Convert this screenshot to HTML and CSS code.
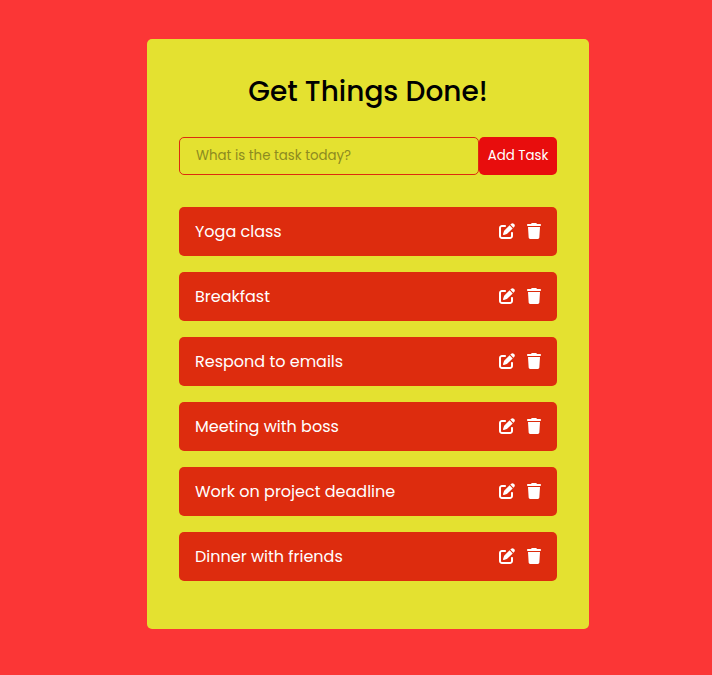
FILE: index.html
```html
<!DOCTYPE html>
<html lang="en">
<head>
<meta charset="utf-8">
<meta name="viewport" content="width=device-width, initial-scale=1">
<title>Get Things Done!</title>
<link rel="stylesheet" href="styles.css">
</head>
<body>
<svg class="sprite" aria-hidden="true">
  <symbol id="edit" viewBox="0 0 512 512"><path d="M471.6 21.7c-21.9-21.9-57.3-21.9-79.2 0L362.3 51.7l97.9 97.9 30.1-30.1c21.9-21.9 21.9-57.3 0-79.2L471.6 21.7zm-299.2 220c-6.1 6.1-10.8 13.6-13.5 21.9l-29.6 88.8c-2.9 8.6-.6 18.1 5.8 24.6s15.9 8.7 24.6 5.8l88.8-29.6c8.2-2.7 15.7-7.4 21.9-13.5L437.7 172.3 339.7 74.3 172.4 241.7zM96 64C43 64 0 107 0 160V416c0 53 43 96 96 96H352c53 0 96-43 96-96V320c0-17.7-14.3-32-32-32s-32 14.3-32 32v96c0 17.7-14.3 32-32 32H96c-17.7 0-32-14.3-32-32V160c0-17.7 14.3-32 32-32h96c17.7 0 32-14.3 32-32s-14.3-32-32-32H96z"/></symbol>
  <symbol id="trash" viewBox="0 0 448 512"><path d="M135.2 17.7L128 32H32C14.3 32 0 46.3 0 64S14.3 96 32 96H416c17.7 0 32-14.3 32-32s-14.3-32-32-32H320l-7.2-14.3C307.4 6.8 296.3 0 284.2 0H163.8c-12.1 0-23.2 6.8-28.6 17.7zM416 128H32L53.2 467c1.6 25.3 22.6 45 47.9 45H346.9c25.3 0 46.3-19.7 47.9-45L416 128z"/></symbol>
</svg>
<main class="card">
  <h1 class="title">Get Things Done!</h1>
  <form class="task-form">
    <input class="task-input" type="text" placeholder="What is the task today?" aria-label="What is the task today?">
    <button class="task-submit" type="submit">Add Task</button>
  </form>
  <ul class="tasks">
    <li class="task"><span class="task-name">Yoga class</span><button class="icon-button" type="button" aria-label="Edit Yoga class"><svg class="icon-edit"><use href="#edit"/></svg></button><button class="icon-button" type="button" aria-label="Delete Yoga class"><svg class="icon-trash"><use href="#trash"/></svg></button></li>
    <li class="task"><span class="task-name">Breakfast</span><button class="icon-button" type="button" aria-label="Edit Breakfast"><svg class="icon-edit"><use href="#edit"/></svg></button><button class="icon-button" type="button" aria-label="Delete Breakfast"><svg class="icon-trash"><use href="#trash"/></svg></button></li>
    <li class="task"><span class="task-name">Respond to emails</span><button class="icon-button" type="button" aria-label="Edit Respond to emails"><svg class="icon-edit"><use href="#edit"/></svg></button><button class="icon-button" type="button" aria-label="Delete Respond to emails"><svg class="icon-trash"><use href="#trash"/></svg></button></li>
    <li class="task"><span class="task-name">Meeting with boss</span><button class="icon-button" type="button" aria-label="Edit Meeting with boss"><svg class="icon-edit"><use href="#edit"/></svg></button><button class="icon-button" type="button" aria-label="Delete Meeting with boss"><svg class="icon-trash"><use href="#trash"/></svg></button></li>
    <li class="task"><span class="task-name">Work on project deadline</span><button class="icon-button" type="button" aria-label="Edit Work on project deadline"><svg class="icon-edit"><use href="#edit"/></svg></button><button class="icon-button" type="button" aria-label="Delete Work on project deadline"><svg class="icon-trash"><use href="#trash"/></svg></button></li>
    <li class="task"><span class="task-name">Dinner with friends</span><button class="icon-button" type="button" aria-label="Edit Dinner with friends"><svg class="icon-edit"><use href="#edit"/></svg></button><button class="icon-button" type="button" aria-label="Delete Dinner with friends"><svg class="icon-trash"><use href="#trash"/></svg></button></li>
  </ul>
</main>
</body>
</html>
```
FILE: styles.css
```css
* {
  box-sizing: border-box;
}

body {
  margin: 0;
  padding: 39px 0 39px 24px;
  background: #fb3636;
  font-family: Poppins, Inter, sans-serif;
  font-size: 16px;
}

.sprite {
  display: none;
}

.card {
  max-width: 442px;
  margin: 0 auto;
  padding: 32px 32px 48px;
  border-radius: 5px;
  background: #e4e130;
}

.title {
  margin: 0 0 24px;
  color: #000;
  font-size: 28px;
  font-weight: 500;
  line-height: 42px;
  text-align: center;
}

.task-form {
  display: flex;
  margin-bottom: 32px;
}

.task-input,
.task-submit {
  height: 38px;
  border-radius: 5px;
  font-family: inherit;
}

.task-input {
  flex: 1;
  min-width: 0;
  padding: 0 16px;
  border: 1px solid #dd2c0e;
  background: transparent;
  color: #000;
}

.task-input::placeholder {
  color: #8d8b20;
}

.task-submit {
  flex: 0 0 78px;
  padding: 0;
  border: 0;
  background: #e80d0d;
  color: #fff;
}

.tasks {
  display: grid;
  gap: 16px;
  margin: 0;
  padding: 0;
  list-style: none;
}

.task {
  display: flex;
  align-items: center;
  gap: 12px;
  min-height: 49px;
  padding: 0 16px;
  border-radius: 5px;
  background: #dd2c0e;
  color: #fff;
}

.task-name {
  flex: 1;
}

.icon-button {
  padding: 0 0 1px;
  border: 0;
  background: none;
  color: inherit;
  cursor: pointer;
}

.icon-button svg {
  display: block;
  height: 16px;
  fill: currentColor;
}

.icon-edit {
  width: 16px;
}

.icon-trash {
  width: 14px;
}
```
